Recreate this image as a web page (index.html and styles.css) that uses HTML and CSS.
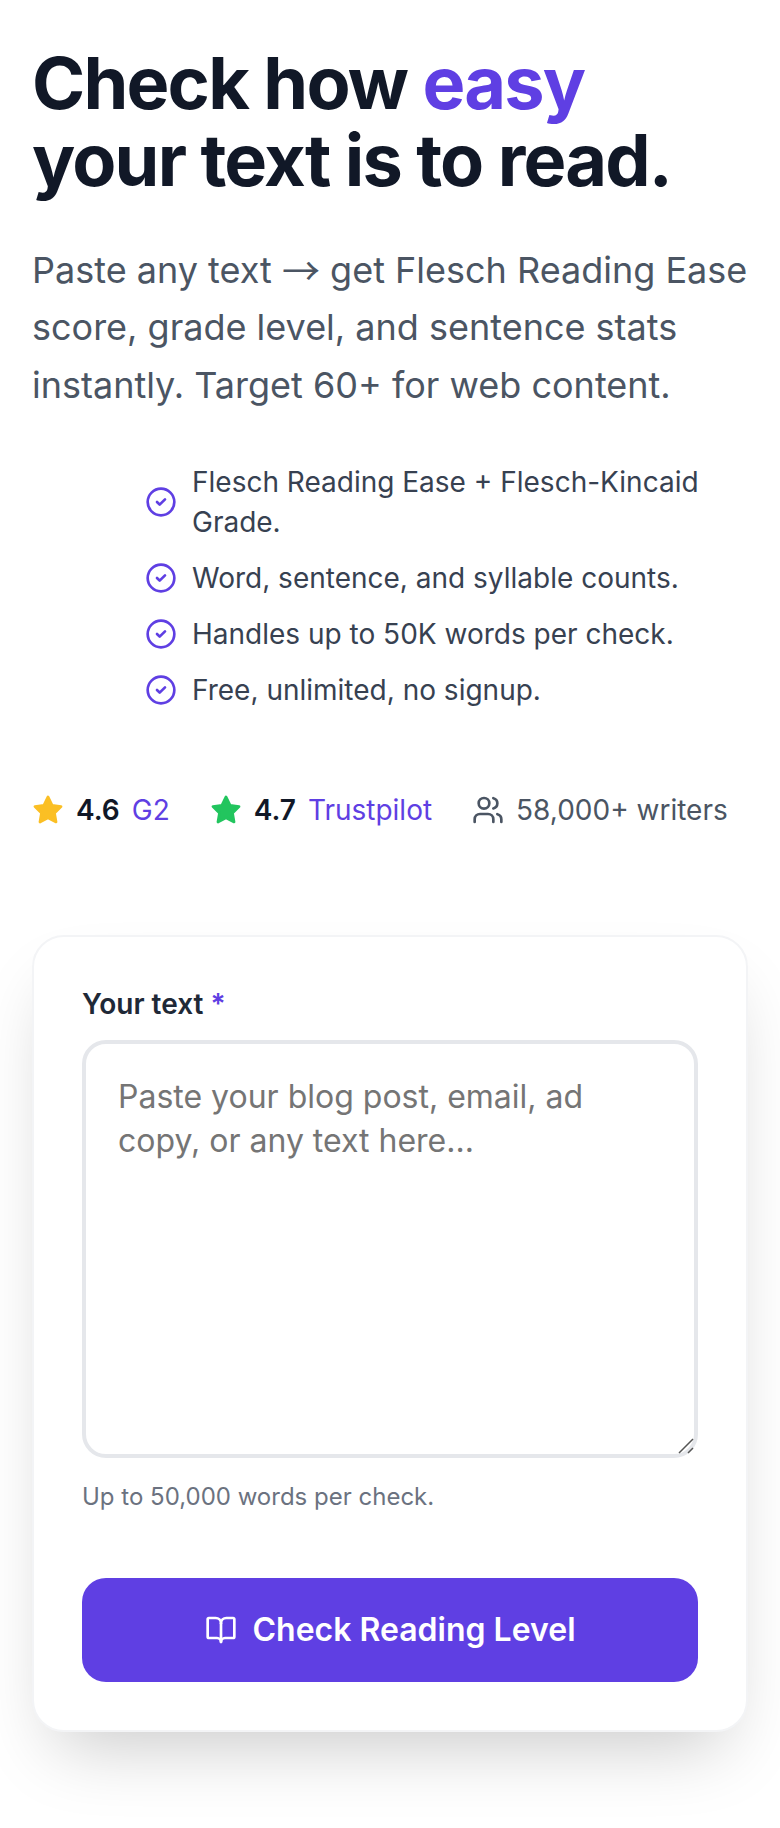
FILE: index.html
```html
<!DOCTYPE html>
<html lang="en">
<head>
<meta charset="utf-8">
<title>Reading Level Checker</title>
<link rel="stylesheet" href="styles.css">
</head>
<body>
<main class="page">
  <h1 class="title">Check how <span class="accent">easy</span><br>your text is to read.</h1>
  <p class="lead">Paste any text <span class="arrow">→</span> get Flesch Reading Ease score, grade level, and sentence stats instantly. Target 60+ for web content.</p>
  <ul class="checks">
    <li><svg class="check" viewBox="0 0 24 24"><circle cx="12" cy="12" r="10"/><path d="m9 12 2 2 4-4"/></svg><span>Flesch Reading Ease + Flesch-Kincaid Grade.</span></li>
    <li><svg class="check" viewBox="0 0 24 24"><circle cx="12" cy="12" r="10"/><path d="m9 12 2 2 4-4"/></svg><span>Word, sentence, and syllable counts.</span></li>
    <li><svg class="check" viewBox="0 0 24 24"><circle cx="12" cy="12" r="10"/><path d="m9 12 2 2 4-4"/></svg><span>Handles up to 50K words per check.</span></li>
    <li><svg class="check" viewBox="0 0 24 24"><circle cx="12" cy="12" r="10"/><path d="m9 12 2 2 4-4"/></svg><span>Free, unlimited, no signup.</span></li>
  </ul>
  <div class="proof">
    <div class="proof-item"><svg class="star gold" viewBox="0 0 24 24"><path d="M12 2.2l3 6.2 6.8 1-4.9 4.8 1.15 6.8L12 17.8 5.95 21l1.15-6.8-4.9-4.8 6.8-1z"/></svg><b>4.6</b><a>G2</a></div>
    <div class="proof-item"><svg class="star green" viewBox="0 0 24 24"><path d="M12 2.2l3 6.2 6.8 1-4.9 4.8 1.15 6.8L12 17.8 5.95 21l1.15-6.8-4.9-4.8 6.8-1z"/></svg><b>4.7</b><a>Trustpilot</a></div>
    <div class="proof-item users"><svg class="people" viewBox="0 0 24 24"><path d="M16 21v-2a4 4 0 0 0-4-4H6a4 4 0 0 0-4 4v2"/><circle cx="9" cy="7" r="4"/><path d="M22 21v-2a4 4 0 0 0-3-3.87"/><path d="M16 3.13a4 4 0 0 1 0 7.75"/></svg><span>58,000+ writers</span></div>
  </div>
  <form class="card">
    <label class="label" for="txt">Your text <span class="req">*</span></label>
    <div class="area-wrap">
      <textarea id="txt" class="area" placeholder="Paste your blog post, email, ad copy, or any text here..."></textarea>
      <svg class="grip" viewBox="0 0 16 16"><path d="M1 15 15 1M10 15l5-5"/></svg>
    </div>
    <p class="hint">Up to 50,000 words per check.</p>
    <button type="button" class="submit"><svg class="book" viewBox="0 0 24 24"><path d="M12 7v14"/><path d="M3 18a1 1 0 0 1-1-1V4a1 1 0 0 1 1-1h5a4 4 0 0 1 4 4 4 4 0 0 1 4-4h5a1 1 0 0 1 1 1v13a1 1 0 0 1-1 1h-6a3 3 0 0 0-3 3 3 3 0 0 0-3-3z"/></svg>Check Reading Level</button>
  </form>
</main>
</body>
</html>
```
FILE: styles.css
```css
* { box-sizing: border-box; }
html, body { margin: 0; padding: 0; background: #fff; }
body { font-family: Inter, "Liberation Sans", sans-serif; color: #111827; }
.page { padding: 45px 32px 0; height: 1828px; overflow: hidden; }
.title { margin: 0; font-size: 72px; line-height: 76.8px; font-weight: 700; letter-spacing: -1.8px; color: #111827; }
.accent { color: #5f3fe3; }
.lead { margin: 43px 0 0; font-size: 36px; line-height: 57.6px; color: #4b5563; }
.arrow { font-family: "Noto Sans CJK SC", sans-serif; font-size: 38px; line-height: 0; vertical-align: -2px; }
.checks { list-style: none; margin: 48px 0 0 113px; padding: 0; width: 556px; display: flex; flex-direction: column; gap: 16px; }
.checks li { display: flex; align-items: center; gap: 15px; font-size: 28px; line-height: 40px; color: #374151; }
.check { width: 32px; height: 32px; flex: none; fill: none; stroke: #5f3fe3; stroke-width: 2; stroke-linecap: round; stroke-linejoin: round; }
.proof { display: flex; align-items: center; gap: 40px; margin-top: 80px; font-size: 28px; line-height: 40px; }
.proof-item { display: flex; align-items: center; gap: 12px; }
.proof-item b { font-weight: 600; color: #111827; }
.proof-item a { color: #5f3fe3; }
.star { width: 32px; height: 32px; stroke-width: 2; stroke-linejoin: round; }
.gold { fill: #fbbf24; stroke: #fbbf24; }
.green { fill: #22c55e; stroke: #22c55e; }
.people { width: 32px; height: 32px; fill: none; stroke: #4b5563; stroke-width: 2; stroke-linecap: round; stroke-linejoin: round; }
.users { color: #4b5563; }
.card { margin-top: 105px; padding: 47px 48px 48px; background: #fff; border: 2px solid #f3f4f6; border-radius: 32px; box-shadow: 0 36px 72px -24px rgba(0,0,0,.22); }
.label { display: block; font-size: 28px; line-height: 40px; font-weight: 600; color: #1f2937; }
.req { color: #5f3fe3; }
.area-wrap { position: relative; margin-top: 16px; height: 418px; }
.area { display: block; width: 100%; height: 100%; padding: 31px 32px; border: 4px solid #e5e7eb; border-radius: 24px; font: 32px/44px Inter, "Liberation Sans", sans-serif; resize: none; outline: none; background: #fff; color: #111827; }
.area::placeholder { color: #757575; opacity: 1; }
.grip { position: absolute; right: 4px; bottom: 4px; width: 16px; height: 16px; fill: none; stroke: #555; stroke-width: 1.5; }
.hint { margin: 23px 0 0; font-size: 24px; line-height: 32px; color: #6b7280; }
.submit { display: flex; align-items: center; justify-content: center; gap: 16px; width: 100%; height: 104px; margin-top: 65px; border: 0; border-radius: 24px; background: #5f3fe3; color: #fff; font: 600 32px/40px Inter, "Liberation Sans", sans-serif; }
.book { width: 32px; height: 32px; fill: none; stroke: #fff; stroke-width: 2; stroke-linecap: round; stroke-linejoin: round; }
```
